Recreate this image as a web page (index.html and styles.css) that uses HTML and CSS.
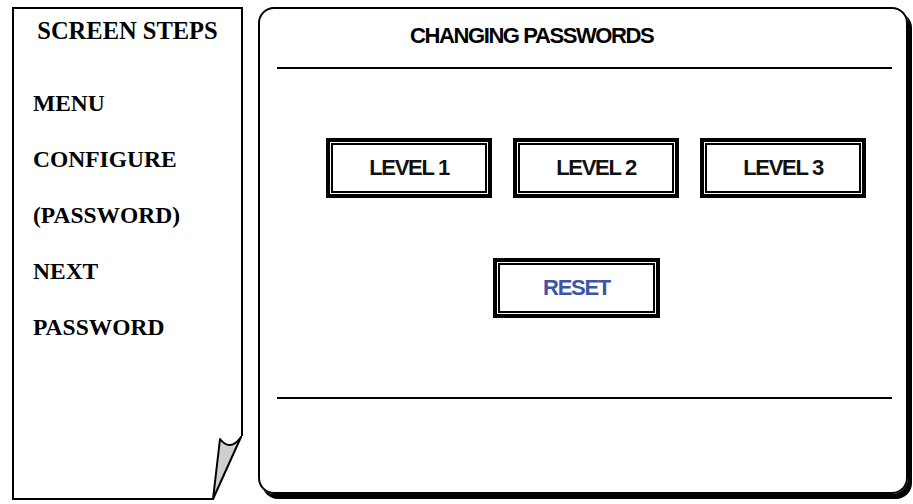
FILE: index.html
```html
<!DOCTYPE html>
<html>
<head>
<meta charset="utf-8">
<link rel="stylesheet" href="styles.css">
</head>
<body>
<div class="page">
  <aside class="steps">
    <h2 class="steps-title">SCREEN STEPS</h2>
    <ul class="steps-list">
      <li>MENU</li>
      <li>CONFIGURE</li>
      <li>(PASSWORD)</li>
      <li>NEXT</li>
      <li>PASSWORD</li>
    </ul>
    <svg class="curl" width="40" height="70" viewBox="0 0 40 70">
      <polygon points="39,6 41,6 41,71 10,71" fill="#fff"/>
      <path d="M10,69 L17,9 Q27,22 38,7 Z" fill="#cfcfcf" stroke="#000" stroke-width="2" stroke-linejoin="round"/>
    </svg>
  </aside>
  <main class="screen">
    <h1 class="screen-title">CHANGING PASSWORDS</h1>
    <div class="rule"></div>
    <div class="levels">
      <div class="btn">LEVEL 1</div>
      <div class="btn">LEVEL 2</div>
      <div class="btn">LEVEL 3</div>
    </div>
    <div class="reset-row">
      <div class="btn btn-reset">RESET</div>
    </div>
    <div class="rule rule-bottom"></div>
  </main>
</div>
</body>
</html>
```

FILE: styles.css
```css
html, body {
  margin: 0;
  padding: 0;
  background: #fff;
}

.page {
  display: flex;
  gap: 15px;
  padding: 7px 0 0 12px;
}

.steps {
  position: relative;
  box-sizing: border-box;
  width: 231px;
  height: 493px;
  border: 2px solid #000;
  padding: 8px 0 0 19px;
  font-family: "Liberation Serif", "Times New Roman", serif;
  font-weight: bold;
  color: #000;
}

.steps-title {
  margin: 0 0 30px -19px;
  font-size: 24.5px;
  line-height: 28px;
  text-align: center;
  font-weight: bold;
}

.steps-list {
  list-style: none;
  margin: 0;
  padding: 0;
  font-size: 23.5px;
  line-height: 56px;
}

.curl {
  position: absolute;
  right: -2px;
  bottom: -2px;
  display: block;
}

.screen {
  box-sizing: border-box;
  width: 650px;
  height: 487px;
  border: 2px solid #000;
  border-radius: 16px;
  box-shadow: 4px 5px 0 #000;
  padding-top: 15px;
  font-family: "Liberation Sans", Arial, sans-serif;
  font-weight: bold;
  color: #000;
}

.screen-title {
  margin: 0 0 19px 150px;
  font-size: 22px;
  line-height: 24px;
  letter-spacing: -1.4px;
  font-weight: bold;
}

.rule {
  height: 2px;
  background: #000;
  margin: 0 14px 0 17px;
}

.levels {
  display: flex;
  gap: 21px;
  margin: 69px 0 0 66px;
}

.btn {
  box-sizing: border-box;
  width: 166px;
  height: 60px;
  border: 4px solid #000;
  box-shadow: inset 0 0 0 1px #fff, inset 0 0 0 3px #000;
  display: flex;
  align-items: center;
  justify-content: center;
  font-size: 22px;
  letter-spacing: -1.3px;
  color: #111;
}

.reset-row {
  display: flex;
  margin: 60px 0 0 233px;
}

.btn-reset {
  width: 167px;
  color: #3b56a6;
}

.rule-bottom {
  margin-top: 79px;
}
```
